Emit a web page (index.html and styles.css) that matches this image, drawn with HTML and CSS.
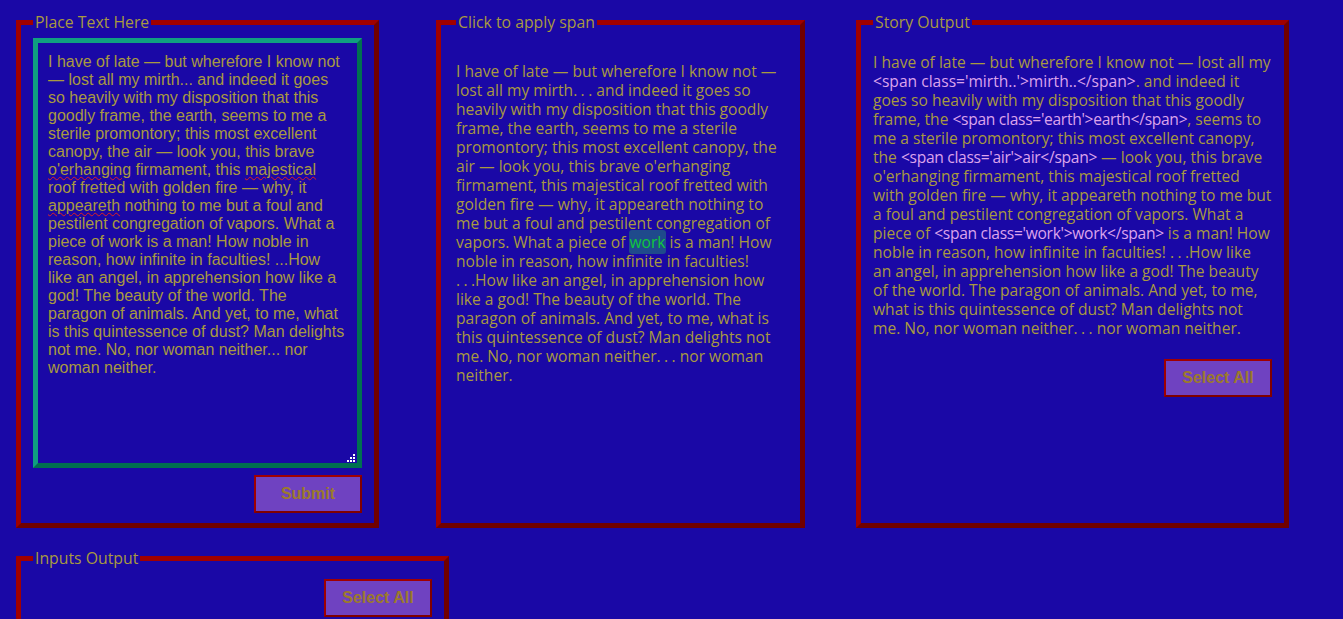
FILE: index.html
```html
<!DOCTYPE html>
<html lang="en">
<head>
<meta charset="utf-8">
<title>Story Span Builder</title>
<link rel="stylesheet" href="styles.css">
</head>
<body>
<div class="page">
  <div class="row">
    <fieldset class="panel panel-input">
      <legend>Place Text Here</legend>
      <div class="editor" contenteditable="true" spellcheck="false">I have of late — but wherefore I know not — lost all my mirth... and indeed it goes so heavily with my disposition that this goodly frame, the earth, seems to me a sterile promontory; this most excellent canopy, the air — look you, this brave <span class="typo">o'erhanging</span> firmament, this <span class="typo">majestical</span> roof fretted with golden fire — why, it <span class="typo">appeareth</span> nothing to me but a foul and pestilent congregation of vapors. What a piece of work is a man! How noble in reason, how infinite in faculties! ...How like an angel, in apprehension how like a god! The beauty of the world. The paragon of animals. And yet, to me, what is this quintessence of dust? Man delights not me. No, nor woman neither... nor woman neither.</div>
      <div class="actions"><button class="btn" type="button">Submit</button></div>
    </fieldset>

    <fieldset class="panel panel-picker">
      <legend>Click to apply span</legend>
      <p class="story picker-text">I have of late — but wherefore I know not — lost all my mirth<span class="dots">..</span>. and indeed it goes so heavily with my disposition that this goodly frame, the earth, seems to me a sterile promontory; this most excellent canopy, the air — look you, this brave o'erhanging firmament, this majestical roof fretted with golden fire — why, it appeareth nothing to me but a foul and pestilent congregation of vapors. What a piece of <span class="picked">work</span> is a man! How noble in reason, how infinite in faculties! <span class="dots">..</span>.How like an angel, in apprehension how like a god! The beauty of the world. The paragon of animals. And yet, to me, what is this quintessence of dust? Man delights not me. No, nor woman neither<span class="dots">..</span>. nor woman neither.</p>
    </fieldset>

    <fieldset class="panel panel-output">
      <legend>Story Output</legend>
      <p class="story output-text">I have of late — but wherefore I know not — lost all my <span class="tag">&lt;span class='mirth..'&gt;mirth..&lt;/span&gt;</span>. and indeed it goes so heavily with my disposition that this goodly frame, the <span class="tag tag-narrow">&lt;span class='earth'&gt;earth&lt;/span&gt;</span>, seems to me a sterile promontory; this most excellent canopy, the <span class="tag tag-narrow">&lt;span class='air'&gt;air&lt;/span&gt;</span> — look you, this brave o'erhanging firmament, this majestical roof fretted with golden fire — why, it appeareth nothing to me but a foul and pestilent congregation of vapors. What a piece of <span class="tag tag-narrow">&lt;span class='work'&gt;work&lt;/span&gt;</span> is a man! How noble in reason, how infinite in faculties! <span class="dots">..</span>.How like an angel, in apprehension how like a god! The beauty of the world. The paragon of animals. And yet, to me, what is this quintessence of dust? Man delights not me. No, nor woman neither<span class="dots">..</span>. nor woman neither.</p>
      <div class="actions actions-output"><button class="btn" type="button">Select All</button></div>
    </fieldset>
  </div>

  <fieldset class="panel panel-inputs">
    <legend>Inputs Output</legend>
    <div class="actions actions-inputs"><button class="btn" type="button">Select All</button></div>
  </fieldset>
</div>
</body>
</html>
```

FILE: styles.css
```css
html, body {
  margin: 0;
  padding: 0;
  background: #1a08a6;
}

body {
  font-family: "Open Sans", "DejaVu Sans", sans-serif;
  color: #a99a40;
}

.page {
  padding: 13px 0 0 16px;
}

.row {
  display: flex;
  align-items: stretch;
}

.panel {
  margin: 0;
  min-width: 0;
  box-sizing: border-box;
  border-style: solid;
  border-width: 5px;
  border-color: #a00000 #700000 #700000 #a00000;
  padding: 6px 12px 10px;
  font-size: 15.6px;
  line-height: 19px;
}

.panel legend {
  padding: 0 2px;
  font-size: 15.8px;
  line-height: 19px;
  color: #a99a40;
}

.panel-input {
  width: 363px;
  margin-right: 57px;
  display: flex;
  flex-direction: column;
}

.panel-picker {
  width: 369px;
  margin-right: 51px;
  padding-left: 15px;
  padding-right: 15px;
}

.panel-output {
  width: 433px;
}

.panel-inputs {
  width: 433px;
  margin-top: 21px;
  height: 90px;
}

.editor {
  box-sizing: border-box;
  width: 329px;
  height: 430px;
  border-style: solid;
  border-width: 5px;
  border-color: #10a080 #007050 #007050 #10a080;
  padding: 10px 10px;
  font-family: "Liberation Sans", Arial, sans-serif;
  font-size: 16px;
  line-height: 18px;
  color: #a99a40;
  background: transparent;
  overflow: auto;
  resize: both;
  outline: none;
}

.editor::-webkit-resizer {
  background: url("data:image/svg+xml,%3Csvg xmlns='http://www.w3.org/2000/svg' width='15' height='15'%3E%3Cg fill='%23ffffff'%3E%3Crect x='11' y='6' width='2' height='2'/%3E%3Crect x='8' y='9' width='2' height='2'/%3E%3Crect x='11' y='9' width='2' height='2'/%3E%3Crect x='5' y='12' width='2' height='2'/%3E%3Crect x='8' y='12' width='2' height='2'/%3E%3Crect x='11' y='12' width='2' height='2'/%3E%3C/g%3E%3C/svg%3E") no-repeat;
}

.typo {
  text-decoration: underline wavy #e02020;
  text-decoration-thickness: 1px;
  text-underline-offset: 1px;
}

.actions {
  display: flex;
  justify-content: flex-end;
}

.panel-input .actions {
  margin-top: 7px;
}

.story {
  margin: 0;
  font-family: "Open Sans", "DejaVu Sans", sans-serif;
  font-size: 15.6px;
  line-height: 19px;
  color: #a99a40;
}

.dots {
  letter-spacing: 3.4px;
}

.picker-text {
  margin-top: 24px;
}

.output-text {
  margin-top: 15px;
}

.picked {
  background: #1f4a8c;
  color: #10c83c;
  border-radius: 3px;
  padding: 1px 0;
}

.tag {
  color: #dca4ec;
  white-space: nowrap;
}

.tag-narrow {
  letter-spacing: -0.3px;
}

.actions-output {
  margin-top: 21px;
}

.actions-inputs {
  margin-top: 5px;
}

.btn {
  box-sizing: border-box;
  width: 108px;
  height: 38px;
  border-style: solid;
  border-width: 2px;
  border-color: #a00000 #800000 #800000 #a00000;
  background: #6f42c1;
  color: #9c7a2c;
  font-family: "Liberation Sans", Arial, sans-serif;
  font-weight: bold;
  font-size: 16px;
  padding: 0;
  cursor: pointer;
}
```
